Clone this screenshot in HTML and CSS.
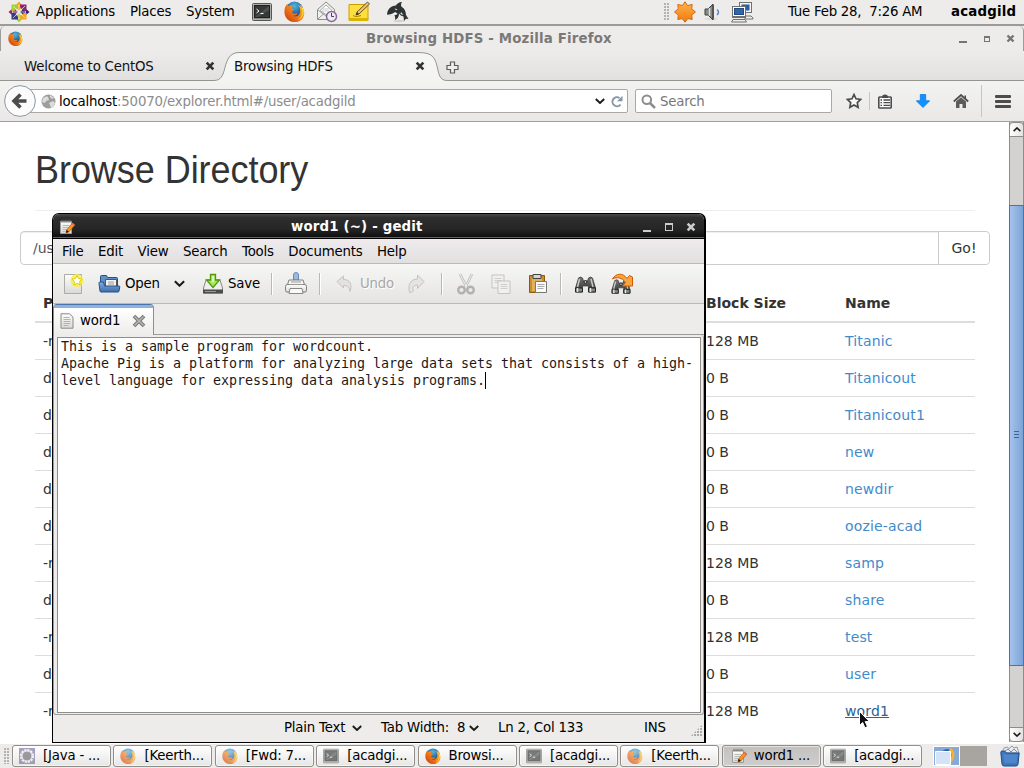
FILE: index.html
```html
<!DOCTYPE html>
<html lang="en">
<head>
<meta charset="utf-8">
<title>Browsing HDFS - Mozilla Firefox</title>
<link rel="stylesheet" href="styles.css">
</head>
<body>
<svg class="defs" width="0" height="0">
  <defs>
    <linearGradient id="metal" x1="0" y1="0" x2="0" y2="1"><stop offset="0" stop-color="#777"/><stop offset="1" stop-color="#2b302c"/></linearGradient>
    <linearGradient id="sun" x1="0" y1="0" x2="0" y2="1"><stop offset="0" stop-color="#ffb34d"/><stop offset="1" stop-color="#f27a0c"/></linearGradient>
    <radialGradient id="globe" cx=".5" cy=".25" r=".7"><stop offset="0" stop-color="#4fb7e6"/><stop offset="1" stop-color="#10306e"/></radialGradient>
    <linearGradient id="fox" x1="1" y1="0" x2="0" y2="1"><stop offset="0" stop-color="#ffd42a"/><stop offset=".4" stop-color="#f78a1d"/><stop offset="1" stop-color="#c8350c"/></linearGradient>
    <linearGradient id="blue" x1="0" y1="0" x2="0" y2="1"><stop offset="0" stop-color="#88aedc"/><stop offset="1" stop-color="#3c6dab"/></linearGradient>
    <linearGradient id="paper" x1="0" y1="0" x2="0" y2="1"><stop offset="0" stop-color="#fdfdfc"/><stop offset="1" stop-color="#d9dad6"/></linearGradient>
    <symbol id="firefox" viewBox="0 0 20 20">
      <circle cx="10" cy="9" r="8.500" fill="url(#globe)"/>
      <path d="M1.200 5.500 3 2.500 4 5c2-1.500 4-1 4.500-.5C7.500 5.500 7.500 6 8 7.500l2 .5-2.500 2c.5 2.500 3.500 2.500 5.500 1.500-.5 2-2.500 3-4.500 2.500 3.500 2 7-1 7-4.500 0-3-1-4.500-2.500-6 4 1.500 6 4.500 6.300 7.500.2 5.500-4.300 9.300-9.300 9.300C4.500 19.800.2 15.500.4 10c0-1.700.3-3.200.8-4.500z" fill="url(#fox)"/>
      <path d="M14.500 2.500c3.500 2.500 4.800 6 4 9.500-.6 3-2.700 5.500-5.500 6.500 3.500-3 5-6 4.400-9.500-.4-2.700-1.400-4.700-2.900-6.500z" fill="#ffd93b"/>
    </symbol>
    <symbol id="terminal" viewBox="0 0 20 20">
      <rect x=".5" y="1.500" width="19" height="17" rx="1" fill="#d0d2ce" stroke="#555753"/>
      <rect x="1.500" y="2.500" width="17" height="15" fill="#8a8c88"/>
      <rect x="2.500" y="3.500" width="15" height="12" fill="#353937" stroke="#1e201f"/>
      <path d="m4.500 7 2.500 2-2.500 2M8.500 11.500h3" fill="none" stroke="#fff"/>
      <path d="M3 15 17 4v4L6 15z" fill="#fff" opacity=".12"/>
    </symbol>
    <symbol id="gedit" viewBox="0 0 16 16">
      <path d="M1.500 2.500h11v12h-11z" fill="url(#paper)" stroke="#9b9c98"/>
      <path d="M3 .8v3M5 .8v3M7 .8v3M9 .8v3M11 .8v3" stroke="#777" stroke-width="1"/>
      <path d="M3.500 6.500h7M3.500 8.500h6M3.500 10.500h4M3.500 12.500h3" stroke="#b8bab5"/>
      <path d="m7 13.800.7-3 5.800-6.800 2.300 2.100-5.900 6.800z" fill="#ff921e" stroke="#b3540a" stroke-width=".7"/>
      <path d="m7 13.800.7-3 2.200 2.100z" fill="#111"/><path d="m12.800 5 .9-1.100 2.200 2-.9 1.100z" fill="#e86868"/>
    </symbol>
    <symbol id="bino" viewBox="0 0 22 20">
      <path d="M4 4q2-2 4 0l1 3h4l1-3q2-2 4 0l3 10v4h-7v-6H8v6H1v-4z" fill="url(#metal)" stroke="#333" stroke-width=".7"/>
      <path d="M5 5 3 13M16.500 5l2 8" stroke="#c7cac5" stroke-width="1.500"/>
      <path d="M1 14h7v4H1zM14 14h7v4h-7z" fill="#838983" stroke="#222"/>
      <path d="M3 14v4M16 14v4" stroke="#e4e6e2" stroke-width="1.500"/><circle cx="11" cy="8" r="1.500" fill="#bbb" stroke="#222"/>
    </symbol>
    <symbol id="chev" viewBox="0 0 10 6"><path d="m.8 1 4.200 4 4.200-4" fill="none" stroke="#1a1a1a" stroke-width="1.900"/></symbol>
    <symbol id="closex" viewBox="0 0 9 9"><path d="m1.500 1.500 6 6m0-6-6 6" fill="none" stroke="currentColor" stroke-width="2.400"/></symbol>
  </defs>
</svg>

<div class="desktop">
  <header class="panel">
    <svg class="ic centos" width="22" height="22" viewBox="0 0 22 22">
      <path d="m11 .5 3 3.500h-6zM11 4l2.500 3L11 10 8.500 7z" fill="#efa724"/><path d="m21.500 11-3.500 3V8zM18 11l-3 2.500L12 11l3-2.500z" fill="#262577"/>
      <path d="m11 21.500-3-3.500h6zM11 18l-2.500-3 2.500-3 2.500 3z" fill="#a5cd39"/><path d="M.5 11 4 8v6zM4 11l3-2.500 3 2.500-3 2.500z" fill="#932279"/>
      <path d="M3.500 3.500H10V6L8 8.500 6 10H3.500z" fill="#a5cd39"/><path d="M18.500 3.500H12V6l2 2.500 2 1.500h2.500z" fill="#932279"/>
      <path d="M3.500 18.500H10V16l-2-2.500L6 12H3.500z" fill="#3b3a86"/><path d="M18.500 18.500H12V16l2-2.500 2-1.500h2.500z" fill="#efa724"/>
      <path d="m5 5 12 12M17 5 5 17M11 4v14M4 11h14" stroke="#edeceb" stroke-width=".7"/>
    </svg>
    <span class="t m1">Applications</span><span class="t m2">Places</span><span class="t m3">System</span>
    <svg class="ic p1" width="20" height="20"><use href="#terminal"/></svg>
    <svg class="ic p2" width="21" height="21"><use href="#firefox"/></svg>
    <svg class="ic p3" width="22" height="22" viewBox="0 0 22 22">
      <path d="M1.500 8.500 10 1l8.500 7.500v10h-17z" fill="#f0f0ee" stroke="#8b8d89"/><path d="M4 9.500 10 4l6 5.500-6 4z" fill="#fff" stroke="#aaa"/><path d="m2 18 6-5.500M2 9l8 6" fill="none" stroke="#999"/><path d="M6 8h7M6 10h7" stroke="#ccc"/>
      <circle cx="15.500" cy="15.500" r="5" fill="#eee9f3" stroke="#85699a" stroke-width="1.500"/><path d="M15.500 12v3.500H18" fill="none" stroke="#444"/>
    </svg>
    <svg class="ic p4" width="22" height="22" viewBox="0 0 22 22">
      <path d="M1 3.500h19v16H1z" fill="#fddf3e" stroke="#c9a000"/><path d="M1 17h19v3H1z" fill="#d9b400"/><path d="M5 14.500c2 1.500 5 1 8 0" fill="none" stroke="#a07c00"/>
      <path d="m8 14 1-3 10.500-10 2 2L11 13z" fill="#e9c27a" stroke="#4f3405" stroke-width=".8"/><path d="m8 14 1-3 2 2z" fill="#333"/>
    </svg>
    <svg class="ic p5" width="24" height="22" viewBox="0 0 24 22">
      <ellipse cx="13" cy="20" rx="6" ry="1.200" fill="#d2d1cf"/>
      <path d="M1 13.500C1.500 8 5 4.500 10 4.500c.5-1.500 3-3.500 6-3.500-1.200 2-1.200 3.200-.4 4.800 3 1.700 4.400 5.200 4.400 8.200l2.500 4-2.500-.3L18 20l-.5-4.500c-2-.5-3.500-1.500-4.500-3 0 3.500-1.500 5.500-4 6.500.5-2.500 0-4-1.200-5.200-2 .7-4.300.7-6.800-.3z" fill="#2e3436"/>
      <path d="M2 13.500c2.500.3 5-.8 7-2.500l2.500 1.500c-1 2-6 3.500-9.500 1zM8.500 7.500l3 .7-1.500 1zM15 11l2.500 3-3-1z" fill="#eee"/>
    </svg>
    <span class="dots d1"></span>
    <svg class="ic p6" width="22" height="22" viewBox="0 0 22 22"><path d="m11 .8 2.600 3.800 4.600-1.200-.5 4.300 3.800 3.300-3.800 3 .5 4.500-4.400-.9L11 21.200l-2.800-3.600-4.400.9.500-4.500-3.800-3 3.800-3.300-.5-4.300 4.600 1.200z" fill="url(#sun)" stroke="#cf6100" stroke-width=".9"/></svg>
    <svg class="ic p7" width="18" height="22" viewBox="0 0 18 22"><ellipse cx="8" cy="18" rx="7" ry="1.500" fill="#ddd"/><path d="M2 8h3l5-5v16l-5-5H2z" fill="#868a86" stroke="#3c403e"/><path d="M6.500 7v8" stroke="#ddd" stroke-width="1.500"/><path d="M9 4v14h2V4z" fill="#555"/><path d="M14 8.500q3 2.500 0 5.500" fill="none" stroke="#5c86c0" stroke-width="1.500"/></svg>
    <svg class="ic p8" width="23" height="22" viewBox="0 0 23 22">
      <g stroke="#70726e"><rect x="8.500" y="1.500" width="12" height="10" fill="#f4f4f2"/><path d="M14 15h6l2 2v1h-8z" fill="#eee"/><rect x="1.500" y="6.500" width="13" height="10" fill="#f4f4f2"/><path d="M2 18.500h12l1.500 2.500H.5z" fill="#eee"/></g>
      <rect x="10.500" y="3.500" width="8" height="6" fill="#2d5c9c"/><rect x="1.500" y="5.500" width="13" height="10" fill="#fff" stroke="#70726e"/><rect x="3.500" y="7.500" width="9" height="6" fill="#3465a4" stroke="#204a87"/>
    </svg>
    <span class="t m4">Tue Feb 28,&nbsp; 7:26 AM</span><b class="t m5">acadgild</b>
  </header>

  <section class="browser">
    <div class="bt">
      <svg class="ic bti" width="15" height="15"><use href="#firefox"/></svg>
      <b class="t btt">Browsing HDFS - Mozilla Firefox</b>
      <div class="wb grey"><i class="min"></i><i class="max"></i><svg width="9" height="9"><use href="#closex"/></svg></div>
    </div>
    <div class="tabs">
      <svg class="tabshape" width="1024" height="31" viewBox="0 0 1024 31">
        <defs><linearGradient id="tabg" x1="0" y1="0" x2="0" y2="1"><stop offset="0" stop-color="#f6f6f5"/><stop offset="1" stop-color="#f3f3f2"/></linearGradient></defs>
        <path d="M0 30.500h214c7 0 9-5 11-13s5-15 14-15h175c11 0 19 0 22 10 3 9 2 18 11 18h577v2H0z" fill="url(#tabg)" stroke="#949490"/>
      </svg>
      <span class="t tab1">Welcome to CentOS</span><svg class="ic tx1" width="10" height="10"><use href="#closex"/></svg>
      <span class="t tab2">Browsing HDFS</span><svg class="ic tx2" width="10" height="10"><use href="#closex"/></svg>
      <svg class="ic plus" width="13" height="13" viewBox="0 0 13 13"><path d="M4.500 1h4v3.500H12v4H8.500V12h-4V8.500H1v-4h3.500z" fill="#eee" stroke="#5b5b5b" stroke-width="1.200"/></svg>
    </div>
    <div class="nav">
      <svg class="ic back" width="32" height="32" viewBox="0 0 32 32"><circle cx="16" cy="16" r="15.400" fill="#fbfbfb" stroke="#8c96a3"/><path d="m16.500 9.500-6.500 6.500 6.500 6.500M11 16h11.500" fill="none" stroke="#4c4c4c" stroke-width="3.600"/></svg>
      <div class="url">
        <svg class="ic world" width="15" height="15" viewBox="0 0 15 15"><circle cx="7.500" cy="7.500" r="7" fill="#9d9d9d"/><path d="M2 4c2-1 4-2 5-1l1 3-3 1-1 2-3-1zM9 1l4 3-2 1-2-2zM8 9l4-2 2 2-2 4-2 1-1-3z" fill="#dcdcdc"/></svg>
        <span class="t ut">localhost<span class="dim">:50070/explorer.html#/user/acadgild</span></span>
        <svg class="ic uc" width="10" height="6"><use href="#chev"/></svg>
        <svg class="ic ur" width="12" height="13" viewBox="0 0 12 13"><path d="M9.500 9.500A4.500 4.500 0 1 1 8.500 3" fill="none" stroke="#8796a6" stroke-width="2"/><path d="M11.500.8v5.400H6z" fill="#8796a6"/></svg>
      </div>
      <div class="search"><svg width="15" height="15" viewBox="0 0 15 15"><circle cx="5.800" cy="5.800" r="4.300" fill="none" stroke="#8d8d8d" stroke-width="2"/><path d="m9 9 5 5" stroke="#8d8d8d" stroke-width="2.500"/></svg><span class="t st">Search</span></div>
      <svg class="ic n1" width="16" height="16" viewBox="0 0 16 16"><path d="m8 1.500 2 4.300 4.700.6-3.400 3.200.8 4.700L8 12l-4.100 2.300.8-4.700-3.400-3.200L6 5.800z" fill="#fbfbfb" stroke="#4c4c4c" stroke-width="1.700"/></svg>
      <i class="vs v1"></i>
      <svg class="ic n2" width="14" height="15" viewBox="0 0 14 15"><path d="M1.500 3h11q.7 0 .7.700v9.600q0 .7-.7.700h-11q-.7 0-.7-.7V3.700q0-.7.700-.7z" fill="#fbfbfb" stroke="#4c4c4c" stroke-width="1.600"/><path d="M4 3q0-2.500 3-2.500T10 3v1H4z" fill="#4c4c4c"/><path d="M2.500 6h1.500M5.500 6H12M2.500 8.700h1.500M5.500 8.700H12M2.500 11.400h1.500M5.500 11.400H12" stroke="#4c4c4c" stroke-width="1.300"/></svg>
      <svg class="ic n3" width="14" height="14" viewBox="0 0 14 14"><path d="M4.300.5h5.400v6.300h4L7 13.500.3 6.800h4z" fill="#1291ff" stroke="#0a7de0" stroke-width=".8"/></svg>
      <svg class="ic n4" width="16" height="15" viewBox="0 0 16 15"><path d="M.8 7.500 8 1l7.200 6.500" fill="none" stroke="#4c4c4c" stroke-width="1.700"/><path d="M3 7.500 8 3.300l5 4.200V14H9.500v-4h-3v4H3z" fill="#5b5b5b"/><path d="M11.500 1.500h1.500V5l-1.500-1z" fill="#4c4c4c"/></svg>
      <i class="vs v2"></i>
      <div class="burger"><i></i><i></i><i></i></div>
    </div>
    <div class="view">
      <main class="page">
        <h1><span>Browse Directory</span></h1>
        <div class="path"><span>/user/acadgild</span><button>Go!</button></div>
        <div class="table">
          <div class="row head"><span>Permission</span><span>Block Size</span><span>Name</span></div>
          <div class="row"><span>-rw-r--r--</span><span>128 MB</span><a>Titanic</a></div>
          <div class="row"><span>drwxr-xr-x</span><span>0 B</span><a>Titanicout</a></div>
          <div class="row"><span>drwxr-xr-x</span><span>0 B</span><a>Titanicout1</a></div>
          <div class="row"><span>drwxr-xr-x</span><span>0 B</span><a>new</a></div>
          <div class="row"><span>drwxr-xr-x</span><span>0 B</span><a>newdir</a></div>
          <div class="row"><span>drwxr-xr-x</span><span>0 B</span><a>oozie-acad</a></div>
          <div class="row"><span>-rw-r--r--</span><span>128 MB</span><a>samp</a></div>
          <div class="row"><span>drwxr-xr-x</span><span>0 B</span><a>share</a></div>
          <div class="row"><span>-rw-r--r--</span><span>128 MB</span><a>test</a></div>
          <div class="row"><span>drwxr-xr-x</span><span>0 B</span><a>user</a></div>
          <div class="row last"><span>-rw-r--r--</span><span>128 MB</span><a class="hover">word1</a></div>
        </div>
      </main>
      <div class="sb"><div class="sbtn top"><svg class="flip" width="8" height="5"><use href="#chev"/></svg></div><div class="thumb"><i></i><i></i><i></i></div><div class="sbtn bot"><svg width="8" height="5"><use href="#chev"/></svg></div></div>
    </div>
  </section>

  <footer class="taskbar">
    <span class="dots d2"></span>
    <div class="task"><svg class="faded" width="16" height="16" viewBox="0 0 16 16"><path d="M0 0h16v16H0z" fill="#7d729f"/><circle cx="8" cy="8" r="6" fill="#6b6773" stroke="#f3f3f3" stroke-width="2.200" stroke-dasharray="2.200 .9"/><circle cx="8" cy="8" r="5" fill="#6b6773" stroke="#eee"/></svg><span class="t">[Java - ...</span></div>
    <div class="task"><svg class="faded" width="16" height="16"><use href="#firefox"/></svg><span class="t">[Keerth...</span></div>
    <div class="task"><svg class="faded" width="16" height="16"><use href="#firefox"/></svg><span class="t">[Fwd: 7...</span></div>
    <div class="task"><svg class="faded" width="16" height="16"><use href="#terminal"/></svg><span class="t">[acadgi...</span></div>
    <div class="task"><svg width="16" height="16"><use href="#firefox"/></svg><span class="t">Browsi...</span></div>
    <div class="task"><svg class="faded" width="16" height="16"><use href="#terminal"/></svg><span class="t">[acadgi...</span></div>
    <div class="task"><svg class="faded" width="16" height="16"><use href="#firefox"/></svg><span class="t">[Keerth...</span></div>
    <div class="task active"><svg width="16" height="16"><use href="#gedit"/></svg><span class="t">word1 ...</span></div>
    <div class="task"><svg class="faded" width="16" height="16"><use href="#terminal"/></svg><span class="t">[acadgi...</span></div>
    <svg class="pager" width="54" height="20" viewBox="0 0 54 20"><path d="M0 0h54v20H0z" fill="#a8a4a0"/><path d="M0 0h27v20H0z" fill="#fff"/><path d="M1 1h25v18H1z" fill="#86a9d8"/><circle cx="14" cy="9" r="6" fill="#2f68b0"/><path d="M17 3c4 3 4 9 0 12" fill="none" stroke="#f4b52c" stroke-width="3"/><path d="M2.500 5.500h15v13h-15z" fill="#d5e3f6" stroke="#fff"/></svg>
    <svg class="trash" width="20" height="22" viewBox="0 0 20 22"><path d="M2 8 4 3l3-1 2 1.500L12 1l2 2 3-1 2 6z" fill="#e9ecee" stroke="#77889a" stroke-width=".8"/><path d="m5 6 3-2 3 3 3-3 3 3" fill="none" stroke="#889"/><path d="M.8 7.500Q.8 6 2 6l3 .2L6.500 8h12.700L18 19q-.2 2-2 2H4q-1.800 0-2-2z" fill="#3f77bd" stroke="#1f4b8c"/><path d="M3 9.500h14.500L16.500 18h-12z" fill="#5a8fd0" opacity=".6"/></svg>
  </footer>

  <section class="gedit">
    <div class="gt">
      <svg class="ic gti" width="16" height="16"><use href="#gedit"/></svg>
      <b class="t gtt">word1 (~) - gedit</b>
      <div class="wb light"><i class="min"></i><i class="max"></i><svg width="10" height="10"><use href="#closex"/></svg></div>
    </div>
    <div class="menu"><span class="t">File</span><span class="t">Edit</span><span class="t">View</span><span class="t">Search</span><span class="t">Tools</span><span class="t">Documents</span><span class="t">Help</span></div>
    <div class="tools">
      <svg class="ic g1" width="22" height="22" viewBox="0 0 22 22"><path d="M1.500 1.500h17v19h-17z" fill="url(#paper)" stroke="#aaaca7"/><circle cx="14" cy="7.500" r="6.500" fill="#f6ee4a" opacity=".85"/><path d="m14 2.500 1.600 3 3.400.6-2.400 2.400.5 3.500-3.100-1.600-3.100 1.600.5-3.500L9 6.100l3.400-.6z" fill="#fff" stroke="#e0cc00"/></svg>
      <svg class="ic g2" width="23" height="20" viewBox="0 0 23 20"><path d="M2.500 13V2.500q0-1 1-1h5l1 2h9q1 0 1 1V13z" fill="#6090c8" stroke="#27508a"/><path d="M7.500 5.500h11v8h-11z" fill="#f3f3f3" stroke="#555"/><path d="M10 8h6M10 10h6" stroke="#999"/><path d="M1.500 8h4l1 4h14.500q1 0 .8 1L21 17q0 1-1 1H3q-1 0-1-1L1 9.500Q1 8 1.500 8z" fill="url(#blue)" stroke="#27508a"/></svg>
      <span class="t gopen">Open</span><svg class="ic g3" width="11" height="7"><use href="#chev"/></svg>
      <svg class="ic g4" width="22" height="22" viewBox="0 0 22 22"><path d="m4 7-2.500 8v5h19v-5L18 7z" fill="#eeeeec" stroke="#888a85"/><path d="M1 16.500h20v4H1z" fill="#4b4e4b"/><path d="M3 18.500h11" stroke="#999"/><path d="M8.500 1.500h5V7h4l-6.500 7.500L4.500 7h4z" fill="#a8ea67" stroke="#4e9a06" stroke-width="1.300"/><path d="M10 3h2v6h-2z" fill="#dcf7bd"/></svg>
      <span class="t gsave">Save</span><i class="sep s1"></i>
      <svg class="ic g5" width="24" height="23" viewBox="0 0 24 23"><path d="M9.500 8V3q0-2.500 2.500-2.500T14.500 3v5z" fill="#9cbbe1" stroke="#6689b8"/><path d="M5 8h14l2 6H3z" fill="#f4f4f3" stroke="#7d807b"/><path d="M1.500 14.500q0-2 2-2h17q2 0 2 2v4q0 1.500-1.500 1.500H3q-1.500 0-1.500-1.500z" fill="url(#paper)" stroke="#7d807b"/><path d="M6 16.500h12l1 5H5z" fill="#f9f9f9" stroke="#888"/><path d="M5 12.500h14M7 10h10" stroke="#999"/></svg>
      <i class="sep s2"></i>
      <svg class="ic g6" width="18" height="18" viewBox="0 0 18 18"><path d="M1 6.500 7.500 1v3.500C14 4.500 16.500 9 14 16.500c-.5-4-2-6-6.500-6V13z" fill="#e3e2e0" stroke="#c3c2c0"/></svg>
      <span class="t gundo">Undo</span>
      <svg class="ic g7" width="18" height="20" viewBox="0 0 18 20"><path d="M17 7.500 10.500 1v4C4 5 .5 10 2.500 18.500 5 18 8 17 6 16c-1-3 1-5 4.500-5v3.500z" fill="#e5e4e2" stroke="#c3c2c0"/></svg>
      <i class="sep s3"></i>
      <svg class="ic g8" width="20" height="22" viewBox="0 0 20 22"><path d="m4 1 7 14M16 1 9 15" stroke="#bdbcbb" stroke-width="2.600"/><path d="m4 1 7 14M16 1 9 15" stroke="#f2f2f2"/><circle cx="5.500" cy="17" r="3.300" fill="none" stroke="#b4b0b1" stroke-width="2.400"/><circle cx="14.500" cy="17" r="3.300" fill="none" stroke="#b4b0b1" stroke-width="2.400"/></svg>
      <svg class="ic g9" width="20" height="20" viewBox="0 0 20 20"><path d="M1 1h12v13H1z" fill="#f1f0ef" stroke="#c4c3c1"/><path d="M3.500 4.500h7M3.500 6.500h7M3.500 8.500h7" stroke="#cfcecc"/><path d="M7 7h12v12.500H7z" fill="#f1f0ef" stroke="#c4c3c1"/><path d="M9.500 10.500h7M9.500 12.500h7M9.500 14.500h7" stroke="#cfcecc"/></svg>
      <svg class="ic g10" width="20" height="21" viewBox="0 0 20 21"><path d="M1.500 2.500h15v17h-15z" fill="#c98e33" stroke="#8f5902"/><path d="M4 5h10v13H4z" fill="#deb060"/><path d="M5 1.500h8v4H5z" fill="#d3d7cf" stroke="#444"/><path d="M7.500 8.500h11v11h-11z" fill="#fafafa" stroke="#777"/><path d="M9.500 11.500h7M9.500 13.500h7M9.500 15.500h6" stroke="#aaa"/></svg>
      <i class="sep s4"></i>
      <svg class="ic g11" width="23" height="20"><use href="#bino"/></svg>
      <svg class="ic g12" width="23" height="22" viewBox="0 0 23 22"><use href="#bino" x="0" y="4" width="22" height="18"/><path d="M2.500 6C6 0 13-.5 17 5.500l2.500-3L22.500 4v9h-10l3-3.500C12 4.500 7 3.500 2.500 6z" fill="#fba43e" stroke="#ce5c00"/></svg>
    </div>
    <div class="gtabs"><div class="gtab"><svg width="14" height="16" viewBox="0 0 14 16"><path d="M1 .8h8.500l3.500 3.400v11H1z" fill="url(#paper)" stroke="#888a85"/><path d="M3.500 4.500h6M3.500 6.500h7M3.500 8.500h7M3.500 10.500h7M3.500 12.500h5" stroke="#b2b4af"/></svg><span class="t">word1</span><svg width="14" height="14" viewBox="0 0 14 14"><path d="m2 2 10 10M12 2 2 12" stroke="#777" stroke-width="3.800"/><path d="m2.500 2.500 9 9M11.500 2.500l-9 9" stroke="#b5b5b3" stroke-width="1.600"/></svg></div></div>
    <div class="gbody"><div class="text">This is a sample program for wordcount.
Apache Pig is a platform for analyzing large data sets that consists of a high-
level language for expressing data analysis programs.<i class="caret"></i></div></div>
    <div class="status"><span class="t z1">Plain Text</span><svg class="ic z2" width="10" height="6"><use href="#chev"/></svg><span class="t z3">Tab Width:&nbsp; 8</span><svg class="ic z4" width="10" height="6"><use href="#chev"/></svg><span class="t z5">Ln 2, Col 133</span><span class="t z6">INS</span><span class="grip"></span></div>
  </section>

  <svg class="cursor" width="15" height="20" viewBox="0 0 15 20"><path d="M1.500 1.500v14l3.200-3 2.200 5.300 2.600-1.200-2.300-5h4.300z" fill="#111" stroke="#fff"/></svg>
</div>
</body>
</html>
```
FILE: styles.css
```css
* { box-sizing: border-box; }
body { margin: 0; background: #fff; font: 13.33px/20px "DejaVu Sans", sans-serif; color: #000; }
svg { display: block; flex: none; }
.defs { position: absolute; }
.desktop { position: relative; width: 1024px; height: 768px; overflow: hidden; display: flex; flex-direction: column; }
.t { white-space: pre; flex: none; letter-spacing: -0.2px; }
.ic { flex: none; }

.panel { height: 26px; flex: none; display: flex; align-items: center; background: #edeceb; border-bottom: 2px solid #9d9b97; }
.panel .t { line-height: 22px; }
.panel .ic { margin-bottom: 1px; }
.centos { margin-left: 8px; }
.m1 { margin-left: 6px; width: 80px; }
.m2 { margin-left: 14px; width: 42px; }
.m3 { margin-left: 14px; width: 49px; }
.p1 { margin-left: 17px; }
.p2 { margin-left: 12px; }
.p3 { margin-left: 11px; }
.p4 { margin-left: 10px; }
.p5 { margin-left: 16px; }
.dots { width: 5px; background: radial-gradient(circle at 1px 1px, #b4b2b0 0.8px, transparent 1px) 0 0 / 3px 3px; flex: none; }
.d1 { height: 18px; margin-left: 254px; }
.p6 { margin-left: 5px; }
.p7 { margin-left: 7px; }
.p8 { margin-left: 10px; }
.m4 { margin-left: 34px; width: 135px; }
.panel .m4 { letter-spacing: -0.25px; }
.m5 { margin-left: 28px; }
.panel .m5 { letter-spacing: 0.2px; }

.browser { height: 718px; flex: none; display: flex; flex-direction: column; background: #edeceb; }
.bt { height: 25px; display: flex; align-items: center; flex: none; border: 1px solid #9d9b97; border-width: 0 1px; border-radius: 5px 5px 0 0; }
.bti { margin-left: 7px; }
.btt { margin-left: 343px; width: 246px; color: #7b7977; letter-spacing: 0.17px; }
.wb { display: flex; align-items: center; }
.wb .min { border-bottom: 2px solid; width: 8px; height: 9px; }
.wb .max { border: 1px solid; border-top-width: 2px; width: 6px; height: 6px; }
.grey { color: #777573; margin-left: 347px; }
.grey .max { margin: 0 16px 0 17px; }
.tabs { height: 30px; flex: none; position: relative; display: flex; align-items: center; background: linear-gradient(#edeceb, #e1e0df); }
.tabshape { position: absolute; left: 0; top: -1px; }
.tabs .t, .tabs .ic { position: relative; }
.tabs .t { color: #111; padding-top: 2px; }
.tab1 { margin-left: 24px; width: 129px; }
.tx1 { margin-left: 52px; color: #333; }
.tab2 { margin-left: 19px; width: 100px; }
.tx2 { margin-left: 81px; color: #333; }
.plus { margin: 2px 0 0 21px; }
.nav { height: 41px; flex: none; display: flex; align-items: center; background: linear-gradient(#f3f3f2, #e9e8e7); border-bottom: 1px solid #a3a19e; }
.back { margin-left: 4px; z-index: 1; }
.url { margin-left: -8px; width: 600px; height: 24px; background: #fff; border: 1px solid #aaa8a5; border-radius: 2px; display: flex; align-items: center; padding-left: 12px; }
.ut { margin-left: 3px; width: 297px; padding-top: 2px; }
.dim { color: #8c8c8c; }
.uc { margin-left: 239px; }
.ur { margin-left: 6px; }
.search { margin-left: 7px; width: 197px; height: 24px; background: #fff; border: 1px solid #aaa8a5; border-radius: 2px; display: flex; align-items: center; padding-left: 5px; }
.st { margin-left: 4px; color: #777; padding-top: 2px; }
.n1 { margin-left: 14px; }
.vs { width: 1px; background: #c3c5c8; flex: none; }
.v1 { height: 18px; margin-left: 7px; }
.n2 { margin-left: 8px; }
.n3 { margin-left: 24px; }
.n4 { margin-left: 23px; }
.v2 { height: 32px; margin-left: 12px; }
.burger { width: 16px; height: 13px; margin-left: 13px; display: flex; flex-direction: column; justify-content: space-between; }
.burger i { height: 3px; background: #4c4c4c; border-radius: 1px; }

.view { flex: 1; min-height: 0; display: flex; background: #fff; }
.page { width: 1009px; padding: 0 19px 0 20px; font-size: 14px; color: #333; overflow: hidden; }
h1 { font: 36px/40px "Liberation Sans", sans-serif; margin: 0 15px; padding-top: 29px; height: 89px; border-bottom: 1px solid #eee; }
h1 span { display: inline-block; transform: scaleY(1.06); transform-origin: 0 32px; letter-spacing: -0.05px; }
.path { margin-top: 20px; height: 34px; display: flex; border: 1px solid #ccc; border-radius: 4px; box-shadow: inset 0 1px 1px #eee; line-height: 32px; }
.path span { flex: 1; padding-left: 12px; color: #555; }
.path button { width: 51px; border: 0; border-left: 1px solid #ccc; background: #fff; padding: 0; font: inherit; color: #333; border-radius: 0 4px 4px 0; }
.table { margin: 20px 15px 0; }
.row { display: grid; grid-template-columns: 663px 139px 1fr; padding: 8px; height: 37px; border-bottom: 1px solid #ddd; }
.head { height: 38px; border-bottom-width: 2px; font-weight: bold; }
.last { border: 0; }
.row a { color: #428bca; letter-spacing: 0.15px; justify-self: start; }
.row .hover { color: #2a6496; text-decoration: underline; }
.sb { width: 15px; height: 620px; background: #d4d2d0; border-left: 1px solid #8e8c89; border-right: 1px solid #8e8c89; display: flex; flex-direction: column; }
.sbtn { height: 15px; border: 1px solid #8e8c89; margin: 0 -1px; background: linear-gradient(90deg, #fff, #e3e2e1); display: flex; align-items: center; justify-content: center; flex: none; }
.top { border-radius: 4px 4px 0 0; }
.bot { border-radius: 0 0 4px 4px; margin-top: auto; }
.flip { transform: scaleY(-1); }
.thumb { height: 461px; margin: 68px -1px 0; padding-bottom: 2px; background: linear-gradient(90deg, #a5c3ea, #7ca3d8); border: 1px solid #4a74a8; display: flex; flex-direction: column; align-items: center; justify-content: center; gap: 2px; }
.thumb i { width: 5px; height: 1px; background: #3d6596; }

.taskbar { height: 24px; flex: none; display: flex; align-items: center; background: #edeceb; }
.d2 { height: 16px; margin: 0 3px 0 4px; }
.task { width: 99px; height: 22px; margin-right: 2.4px; border: 1px solid #918e8a; border-radius: 3px; background: linear-gradient(#fff, #e7e6e5); box-shadow: inset 0 0 0 1px #fff8; display: flex; align-items: center; padding-left: 6px; flex: none; }
.task .t { margin-left: 8px; }
.faded { opacity: .65; }
.active { background: linear-gradient(#c3c1bf, #d0cecc); padding-left: 8px; }
.active .t { margin-left: 7px; }
.pager { margin-left: 8px; }
.trash { margin-left: 13px; }

.gedit { position: absolute; left: 52px; top: 213px; width: 654px; height: 530px; display: flex; flex-direction: column; border: 1px solid #000; border-width: 1px 2px 1px 1px; border-radius: 7px 7px 0 0; background: #edeceb; overflow: hidden; }
.gt { height: 25px; flex: none; display: flex; align-items: center; background: linear-gradient(#4a4a4a, #2e2e2e 15%, #262626 60%, #111 90%, #4b6a8f 91%, #4b6a8f 94%, #000 95%); color: #fff; }
.gti { margin-left: 6px; }
.gtt { margin-left: 216px; width: 131px; letter-spacing: 0.17px; }
.light { margin-left: 221px; color: #ccc; }
.light .min { height: 10px; }
.light .max { width: 8px; height: 8px; margin: 0 13px 0 14px; }
.menu { height: 25px; flex: none; display: flex; align-items: center; padding: 2px 0 0 9px; gap: 14.5px; background: linear-gradient(#efebed, #e1e0df); border-bottom: 1px solid #bbb9b6; }
.tools { height: 40px; flex: none; display: flex; align-items: center; background: linear-gradient(#f6f6f5, #e5e4e2); border-bottom: 1px solid #bbb9b6; }
.g1 { margin-left: 10px; }
.g2 { margin-left: 13px; }
.gopen { margin-left: 4px; width: 36px; }
.g3 { margin-left: 13px; }
.g4 { margin-left: 17px; }
.gsave { margin-left: 4px; width: 32px; }
.sep { width: 1px; height: 22px; background: #bab8b5; box-shadow: 1px 0 #fff; flex: none; }
.s1 { margin-left: 11px; }
.g5 { margin-left: 12px; }
.s2 { margin-left: 11px; }
.g6 { margin-left: 16px; }
.gundo { margin-left: 6px; width: 35px; color: #aaa8a5; text-shadow: 1px 1px #fff; }
.g7 { margin-left: 12px; }
.s3 { margin-left: 16px; }
.g8 { margin-left: 14px; }
.g9 { margin-left: 15px; }
.g10 { margin-left: 17px; }
.s4 { margin-left: 12px; }
.g11 { margin-left: 13px; }
.g12 { margin-left: 13px; }
.gtabs { height: 31px; flex: none; display: flex; border-bottom: 1px solid #9d9b97; }
.gtab { width: 101px; height: 31px; border: 1px solid #918e8a; border-bottom: 0; border-top: 0; border-radius: 4px 4px 0 0; background: linear-gradient(#4a74a8 1px, #8db1e0 1px, #8db1e0 4px, #fff 4px, #edeceb); display: flex; align-items: center; padding: 2px 0 0 6px; }
.gtab .t { margin: 0 12px 0 6px; width: 40px; }
.gbody { height: 380px; flex: none; border: 1px solid #9d9b97; border-top: 0; padding: 2px 2px 2px 3px; border-radius: 0 3px 3px 3px; }
.text { height: 376px; background: #fff; border: 1px solid #918e8a; padding: 0 3px; font: 13.33px/17px "DejaVu Sans Mono", monospace; letter-spacing: -0.025px; white-space: pre; color: #1a1a1a; }
.caret { display: inline-block; width: 1px; height: 17px; background: #000; vertical-align: top; }
.status { flex: 1; display: flex; align-items: center; padding-bottom: 2px; }
.z1 { margin-left: 231px; width: 64px; }
.z2 { margin-left: 4px; }
.z3 { margin-left: 19px; width: 84px; }
.z4 { margin-left: 4px; }
.z5 { margin-left: 19px; width: 84px; }
.z6 { margin-left: 62px; width: 22px; }
.grip { width: 11px; height: 11px; margin: 6px 0 0 25px; background: radial-gradient(circle at 1px 1px, #aaa 0.8px, transparent 1px) 0 0 / 3px 3px; clip-path: polygon(100% 0, 100% 100%, 0 100%); }
.cursor { position: absolute; left: 858px; top: 710px; }
```
